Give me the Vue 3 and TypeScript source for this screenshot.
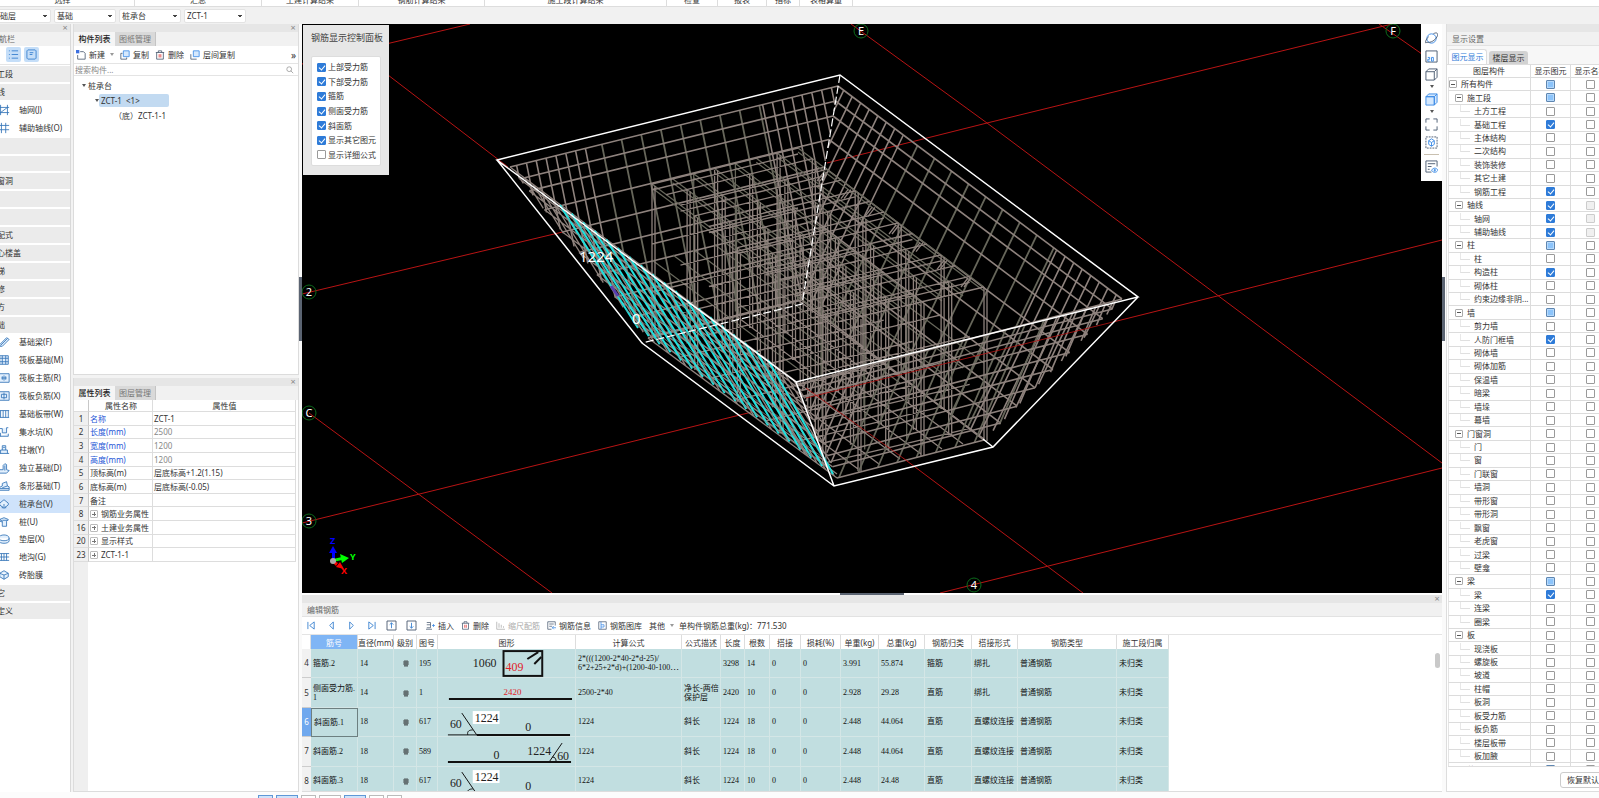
<script setup lang="ts">
import { ref } from 'vue'

type Pt = [number, number]

const ribbon = [
  { label: '选择', w: 144 }, { label: '汇总', w: 127 }, { label: '土建计算结果', w: 97 },
  { label: '钢筋计算结果', w: 126 }, { label: '施工段计算结果', w: 182 }, { label: '检查', w: 51 },
  { label: '报表', w: 49 }, { label: '指标', w: 33 }, { label: '表格算量', w: 53 },
]
const combos = [
  { name: '楼层', value: '基础层' }, { name: '类别', value: '基础' },
  { name: '构件类型', value: '桩承台' }, { name: '构件', value: 'ZCT-1' },
]

interface NavEntry { label: string; icon?: string; active?: boolean }
const nav: NavEntry[] = [
  { label: '施工段' }, { label: '轴线' },
  { label: '轴网(J)', icon: 'M2 0V12M10 0V12M0 3H12M0 9H12M2 9L10 3' },
  { label: '辅助轴线(O)', icon: 'M3 0V12M8 0V12M0 3H12M0 8H12' },
  { label: '柱' }, { label: '墙' }, { label: '门窗洞' }, { label: '梁' }, { label: '板' },
  { label: '装配式' }, { label: '空心楼盖' }, { label: '楼梯' }, { label: '装修' }, { label: '土方' }, { label: '基础' },
  { label: '基础梁(F)', icon: 'M1 9L9 1L12 3L4 11L1 11ZM2 10L10 2' },
  { label: '筏板基础(M)', icon: 'M1 1H11V11H1ZM4 1V11M8 1V11M1 4H11M1 8H11' },
  { label: '筏板主筋(R)', icon: 'M0 1H12V11H0ZM3 6H9M6 3V9M4 4V8M8 4V8' },
  { label: '筏板负筋(X)', icon: 'M0 1H12V11H0ZM3 4H9V8H3ZM6 2V10' },
  { label: '基础板带(W)', icon: 'M0 2H12M0 10H12M2 2V10M5 2V10M8 2V10M11 2V10' },
  { label: '集水坑(K)', icon: 'M0 2H4V7H9V1M9 1H11M0 11H11V8M2 7V11' },
  { label: '柱墩(Y)', icon: 'M0 10H12M2 10V6H10V10M4 6V1H8V6M5 3H7' },
  { label: '独立基础(D)', icon: 'M0 11L1 8H5V3L7 1L9 2V8L12 9L9 12H0ZM7 3V9' },
  { label: '条形基础(T)', icon: 'M0 11V8L4 6V3L9 1L10 6L12 7V11ZM4 8L10 6M0 9H12' },
  { label: '桩承台(V)', icon: 'M1 5L6 1L11 5V7L6 11L1 7ZM4 9V11M8 9V11M6 6V11', active: true },
  { label: '桩(U)', icon: 'M1 3L6 1L11 3L9 5V11H4V5ZM1 3V5L4 6M4 4H11' },
  { label: '垫层(X)', icon: 'M0 5C0 0 12 0 12 5V8C12 12 0 12 0 8ZM0 5C0 9 12 9 12 5' },
  { label: '地沟(G)', icon: 'M0 2H12M0 10H12M3 2V10M6 2V10M9 2V10M0 6H12' },
  { label: '砖胎膜', icon: 'M1 4L6 1L11 4V8L6 11L1 8ZM1 4L6 6L11 4M6 6V11' },
  { label: '其它' }, { label: '自定义' },
]

interface Prop { n: number; name: string; value: string; kind?: string }
const props: Prop[] = [
  { n: 1, name: '名称', value: 'ZCT-1', kind: 'key' },
  { n: 2, name: '长度(mm)', value: '2500', kind: 'key size' },
  { n: 3, name: '宽度(mm)', value: '1200', kind: 'key size' },
  { n: 4, name: '高度(mm)', value: '1200', kind: 'key size' },
  { n: 5, name: '顶标高(m)', value: '层底标高+1.2(1.15)' },
  { n: 6, name: '底标高(m)', value: '层底标高(-0.05)' },
  { n: 7, name: '备注', value: '' },
  { n: 8, name: '钢筋业务属性', value: '', kind: 'group' },
  { n: 16, name: '土建业务属性', value: '', kind: 'group' },
  { n: 20, name: '显示样式', value: '', kind: 'group' },
  { n: 23, name: 'ZCT-1-1', value: '', kind: 'group' },
]

const rebarToggles = ref([
  { label: '上部受力筋', on: true }, { label: '下部受力筋', on: true }, { label: '箍筋', on: true },
  { label: '侧面受力筋', on: true }, { label: '斜面筋', on: true }, { label: '显示其它图元', on: true },
  { label: '显示详细公式', on: false },
])

/* Layer tree: leading digit = depth, trailing mark: * checked, ~ partial, ! checked with locked name box */
const layerSource = `0所有构件~|1施工段~|2土方工程|2基础工程*|2主体结构|2二次结构|2装饰装修|2其它土建|2钢筋工程*
|1轴线!|2轴网!|2辅助轴线!|1柱~|2柱|2构造柱*|2砌体柱|2约束边缘非阴...|1墙~|2剪力墙|2人防门框墙*|2砌体墙|2砌体加筋
|2保温墙|2暗梁|2墙垛|2幕墙|1门窗洞|2门|2窗|2门联窗|2墙洞|2带形窗|2带形洞|2飘窗|2老虎窗|2过梁|2壁龛
|1梁~|2梁*|2连梁|2圈梁|1板|2现浇板|2螺旋板|2坡道|2柱帽|2板洞|2板受力筋|2板负筋|2楼层板带|2板加腋|1装配式~`
const layers = ref(layerSource.replace(/\n/g, '').split('|').map((s) => {
  const mark = s.slice(-1)
  return {
    depth: Number(s[0]),
    name: s.slice(1).replace(/[*~!]$/, ''),
    on: mark === '*' || mark === '!',
    part: mark === '~',
    locked: mark === '!',
  }
}))

const columns = [
  { t: '筋号', w: 47 }, { t: '直径(mm)', w: 36 }, { t: '级别', w: 23 }, { t: '图号', w: 21 }, { t: '图形', w: 138 },
  { t: '计算公式', w: 106 }, { t: '公式描述', w: 39 }, { t: '长度', w: 24 }, { t: '根数', w: 25 }, { t: '搭接', w: 31 },
  { t: '损耗(%)', w: 40 }, { t: '单重(kg)', w: 38 }, { t: '总重(kg)', w: 46 }, { t: '钢筋归类', w: 47 },
  { t: '搭接形式', w: 46 }, { t: '钢筋类型', w: 99 }, { t: '施工段归属', w: 52 },
]
interface Bar { n: number; name: string; d: string; code: string; shape: string; formula: string; rest: string[] }
const bars: Bar[] = [
  { n: 4, name: '箍筋.2', d: '14', code: '195', shape: 'stirrup', formula: '2*(((1200-2*40-2*d-25)/\n6*2+25+2*d)+(1200-40-100⋯', rest: ['', '3298', '14', '0', '0', '3.991', '55.874', '箍筋', '绑扎', '普通钢筋', '未归类'] },
  { n: 5, name: '侧面受力筋.\n1', d: '14', code: '1', shape: 'straight', formula: '2500-2*40', rest: ['净长-两倍\n保护层', '2420', '10', '0', '0', '2.928', '29.28', '直筋', '绑扎', '普通钢筋', '未归类'] },
  { n: 6, name: '斜面筋.1', d: '18', code: '617', shape: 'left', formula: '1224', rest: ['斜长', '1224', '18', '0', '0', '2.448', '44.064', '直筋', '直螺纹连接', '普通钢筋', '未归类'] },
  { n: 7, name: '斜面筋.2', d: '18', code: '589', shape: 'right', formula: '1224', rest: ['斜长', '1224', '18', '0', '0', '2.448', '44.064', '直筋', '直螺纹连接', '普通钢筋', '未归类'] },
  { n: 8, name: '斜面筋.3', d: '18', code: '617', shape: 'left', formula: '1224', rest: ['斜长', '1224', '10', '0', '0', '2.448', '24.48', '直筋', '直螺纹连接', '普通钢筋', '未归类'] },
]

/* ---- wireframe geometry ---- */
const mix = (a: Pt, b: Pt, t: number): Pt => [a[0] + (b[0] - a[0]) * t, a[1] + (b[1] - a[1]) * t]
const seg = (a: Pt, b: Pt) => `M${a[0].toFixed(1)} ${a[1].toFixed(1)}L${b[0].toFixed(1)} ${b[1].toFixed(1)}`
const down = (p: Pt, h: number): Pt => [p[0], p[1] + h]

function hit(p: Pt, dir: Pt, a: Pt, b: Pt): number {
  const e: Pt = [b[0] - a[0], b[1] - a[1]]
  const den = dir[0] * e[1] - dir[1] * e[0]
  if (Math.abs(den) < 1e-6) return Infinity
  const w: Pt = [a[0] - p[0], a[1] - p[1]]
  const t = (w[0] * e[1] - w[1] * e[0]) / den
  const s = (w[0] * dir[1] - w[1] * dir[0]) / den
  return t > 0.01 && s >= -0.001 && s <= 1.001 ? t : Infinity
}

const half = [0.02, 0.05, 0.08, 0.11, 0.14, 0.17, 0.2, 0.23]
const middle = [0.28, 0.34, 0.4, 0.46, 0.52, 0.58, 0.64, 0.7, 0.76]
const ends = [...half, ...half.map((u) => 1 - u)]
const levels = [0, 0.07, 0.14, 0.25, 0.38, 0.5, 0.63, 0.76, 0.88, 1]

function slanted(tl: Pt, tr: Pt, br: Pt, bl: Pt, dir: Pt, us: number[]): string {
  return us.map((u) => {
    const p = mix(tl, tr, u)
    const t = Math.min(hit(p, dir, tl, bl), hit(p, dir, tr, br), hit(p, dir, bl, br))
    return Number.isFinite(t) ? seg(p, [p[0] + dir[0] * t, p[1] + dir[1] * t]) : ''
  }).join('')
}
const rows = (tl: Pt, tr: Pt, br: Pt, bl: Pt, vs: number[]) => vs.map((v) => seg(mix(tl, bl, v), mix(tr, br, v))).join('')

const A: Pt = [510, 167], B: Pt = [838, 86], C: Pt = [1122, 299], D: Pt = [799, 384]
const a: Pt = [648, 338], b: Pt = [802, 300], c: Pt = [984, 440], d: Pt = [837, 478]

const backTan = rows(A, B, b, a, levels) + rows(B, C, c, b, levels)
  + slanted(A, B, b, a, [0.2, 1], ends) + slanted(B, C, c, b, [-0.48, 1], ends)
const backOlive = slanted(A, B, b, a, [0.2, 1], middle) + slanted(B, C, c, b, [-0.48, 1], middle)
const frontTan = rows(D, C, c, d, levels) + slanted(D, C, c, d, [-0.43, 1], ends)
const frontOlive = slanted(D, C, c, d, [-0.43, 1], middle)
const sideTan = rows(A, D, d, a, levels) + slanted(A, D, d, a, [0.62, 1], [...ends, ...middle])
const sideCross = rows([556, 202], [768, 362], [833, 474], [638, 328], [0.12, 0.25, 0.38, 0.5, 0.62, 0.74, 0.86, 0.97])

const T0: Pt = [652, 184], T1: Pt = [798, 148], T2: Pt = [984, 287], T3: Pt = [837, 322]
let cageTan = ''
let cageOlive = ''
for (let j = 0; j <= 13; j++) {
  const l = mix(T0, T3, j / 13), r = mix(T1, T2, j / 13)
  const hs = j % 2 ? [0] : [0, 6, 60, 108, 152]
  for (const h of hs) cageTan += seg(down(l, h), down(r, h))
  for (let i = 0; i <= 7; i++) {
    const p = mix(l, r, i / 7)
    if ((i * 2 + j) % 3 === 0) cageTan += seg(p, down(p, 154)) + seg([p[0] + 3, p[1] + 2], [p[0] + 3, p[1] + 154])
    else if (j % 3 === 0 && i % 2 === 0) cageOlive += seg(p, down(p, 148))
  }
}
for (let i = 0; i <= 7; i++) {
  const l = mix(T0, T1, i / 7), r = mix(T3, T2, i / 7)
  for (const h of [0, 4, 76]) cageOlive += seg(down(l, h), down(r, h))
  cageTan += seg(down(l, 152), down(r, 152))
}
let hooks = ''
for (let k = 0; k < 7; k++) {
  const p = mix([824, 172], [968, 278], k / 6)
  hooks += seg(p, [p[0] - 7, p[1] + 9]) + seg([p[0] + 3, p[1]], [p[0] - 4, p[1] + 9])
}
let cyan = ''
for (let k = 0; k <= 18; k++) cyan += seg(mix([560, 205], [768, 360], k / 18), mix([638, 328], [833, 474], k / 18))

const axes = [
  { t: 'C', x: 309, y: 413 }, { t: '2', x: 309, y: 292 }, { t: '3', x: 309, y: 521 },
  { t: 'E', x: 861, y: 31 }, { t: 'F', x: 1393, y: 31 }, { t: '4', x: 974, y: 585 },
]
</script>

<template>
  <div class="app">
    <header class="ribbon">
      <span v-for="r in ribbon" :key="r.label" :style="{ width: r.w + 'px' }">{{ r.label }}</span>
    </header>
    <div class="context">
      <select v-for="cb in combos" :key="cb.name" :aria-label="cb.name"><option>{{ cb.value }}</option></select>
    </div>

    <main class="work">
      <nav class="side pane">
        <div class="strip"><button aria-label="关闭导航栏">×</button></div>
        <h2 class="nav-title">导航栏</h2>
        <div class="nav-tools">
          <button aria-label="列表显示"><svg viewBox="0 0 12 12"><path d="M1 2H2M1 6H2M1 10H2M4 2H11M4 6H11M4 10H11" /></svg></button>
          <button aria-label="图标显示"><svg viewBox="0 0 12 12"><path d="M2 1H10L11 2V10L10 11H2L1 10V2ZM4 4H8M4 6H7" /></svg></button>
        </div>
        <ul class="nav-list">
          <li v-for="n in nav" :key="n.label" :class="{ group: !n.icon, active: n.active }">
            <svg v-if="n.icon" viewBox="-1 -1 14 14"><path :d="n.icon" /></svg>
            <span>{{ n.label }}</span>
          </li>
        </ul>
      </nav>

      <div class="mid">
        <section class="pane list">
          <div class="strip"><button aria-label="关闭构件列表">×</button></div>
          <div class="tabs"><button class="on">构件列表</button><button>图纸管理</button></div>
          <div class="tools">
            <button><svg viewBox="0 0 12 12"><path class="k" d="M5 2H9L11 4V11H2V6" /><path class="fill" d="M0 0H4V4H0Z" /></svg>新建<i class="caret"></i></button>
            <button><svg viewBox="0 0 12 12"><path class="k" d="M3 4H1V11H8V9" /><path class="lt" d="M4 1H11V8H4Z" /></svg>复制</button>
            <button><svg viewBox="0 0 12 12"><path class="k" d="M1 3H11M4 3V1H8V3M2 3V11H10V3" /><path class="red" d="M5 5V9M7 5V9" /></svg>删除</button>
            <button><svg viewBox="0 0 12 12"><path class="k" d="M1 5V11H8" /><path class="lt" d="M4 1H11V8H4Z" /></svg>层间复制</button>
            <button class="more" aria-label="更多">»</button>
          </div>
          <label class="search"><input type="text" placeholder="搜索构件..." aria-label="搜索构件" /><svg viewBox="0 0 10 10"><circle cx="4" cy="4" r="3" /><path d="M6 6L9 9" /></svg></label>
          <ul class="tree">
            <li><i class="caret"></i>桩承台</li>
            <li class="l2"><i class="caret"></i><span class="sel">ZCT-1 &nbsp;&lt;1&gt;</span></li>
            <li class="l3">（底）ZCT-1-1</li>
          </ul>
        </section>
        <section class="pane attrs">
          <div class="strip"><button aria-label="关闭属性列表">×</button></div>
          <div class="tabs"><button class="on">属性列表</button><button>图层管理</button></div>
          <div class="attr-body">
            <table>
              <thead><tr><th class="no"></th><th class="pn">属性名称</th><th>属性值</th></tr></thead>
              <tbody>
                <tr v-for="p in props" :key="p.n" :class="p.kind">
                  <td class="no">{{ p.n }}</td>
                  <td><i v-if="p.kind === 'group'" class="box plus"></i>{{ p.name }}</td>
                  <td>{{ p.value }}</td>
                </tr>
              </tbody>
            </table>
          </div>
        </section>
      </div>
      <div class="split"><i></i></div>

      <div class="center">
        <section class="view">
          <svg class="scene" viewBox="302 24 1140 569" preserveAspectRatio="xMidYMid slice">
            <path class="grid" d="M302 64L470 24M388 75L508 167M302 294L571 230M827 163L987 123L1392 24M851 24L987 123L1442 463M1379 24L1442 68M309 413L552 593M302 523L752 412M940 593L1442 468" />
            <path class="olive" :d="backOlive" />
            <path class="tan" :d="backTan" />
            <path class="olive cage" :d="cageOlive" />
            <path class="tan cage" :d="cageTan" />
            <path class="tan cage" :d="hooks" />
            <path class="olive" :d="frontOlive" />
            <path class="tan" :d="frontTan" />
            <path class="grid dark" d="M806 388L903 458M806 398L1113 322" />
            <path class="grid" d="M903 458L1083 593M1113 322L1442 240" />
            <path class="tan cage" :d="sideTan" />
            <path class="cyan" :d="cyan" />
            <path class="tan cross" :d="sideCross" />
            <path class="violet" d="M611 286L618 296" />
            <path class="edge dash" d="M840 75L802 304L642 343" />
            <path class="edge" d="M497 160L840 75L1138 297L796 382ZM497 160L642 343L834 486L993 447L1138 297M796 382L834 486M983 439L993 447" />
            <text class="dim" x="579" y="262">1224</text>
            <text class="dim" x="632" y="324">0</text>
            <g v-for="ax in axes" :key="ax.t" class="bubble">
              <circle :cx="ax.x" :cy="ax.y" r="7" /><text :x="ax.x" :y="ax.y + 4">{{ ax.t }}</text>
            </g>
            <g class="gizmo">
              <path d="M332 552H335V561H332Z" fill="#00f" /><path d="M329 553L333 546L337 553Z" fill="#00f" />
              <path d="M333 559L342 557V560L333 562Z" fill="#0f0" /><path d="M340 554L349 558L342 563Z" fill="#0f0" />
              <path d="M333 560L338 563L336 566L332 562Z" fill="#f00" /><path d="M336 567L340 562L344 569Z" fill="#f00" />
              <circle cx="333" cy="561" r="3" fill="#aaa" />
              <text x="330" y="544" fill="#00f">Z</text><text x="350" y="560" fill="#0f0">Y</text><text x="341" y="574" fill="#f00">X</text>
            </g>
          </svg>
          <div class="rebar-panel">
            <h2>钢筋显示控制面板</h2>
            <div class="rebar-box">
              <label v-for="t in rebarToggles" :key="t.label"><input v-model="t.on" type="checkbox" />{{ t.label }}</label>
            </div>
          </div>
          <div class="view-tools">
            <button aria-label="动态观察"><svg viewBox="0 0 14 14"><path class="b" d="M7 2A5 5 0 1 1 7 12A5 5 0 0 1 7 2" /><path class="k" d="M2 11C-1 14 1 7 4 5M9 2C12 0 15 1 13 5C11 9 6 12 2 11" /></svg></button>
            <button aria-label="二维"><svg viewBox="0 0 14 14"><path class="k" d="M1 1H13V13H1Z" /><path class="b" d="M3 8H5V10H3V12H5M7 8V12H9V8Z" /></svg></button>
            <button class="dd" aria-label="视角"><svg viewBox="0 0 14 14"><path class="k" d="M1 4H10V13H1ZM1 4L4 1H13V10L10 13M10 4L13 1" /></svg><i class="caret"></i></button>
            <button class="dd" aria-label="显示方式"><svg viewBox="0 0 14 14"><path class="b lt" d="M1 4H10V13H1ZM1 4L4 1H13V10L10 13M10 4L13 1M10 4V13M1 4H10" /></svg><i class="caret"></i></button>
            <button aria-label="全屏"><svg viewBox="0 0 14 14"><path class="k" d="M1 5V1H5M9 1H13V5M13 9V13H9M5 13H1V9" /></svg></button>
            <button aria-label="局部三维"><svg viewBox="0 0 14 14"><path class="k" stroke-dasharray="2 1" d="M1 1H13V13H1Z" /><path class="b" d="M4 5L7 3L10 5V9L7 11L4 9ZM4 5L7 7L10 5M7 7V11" /></svg></button>
            <hr />
            <button aria-label="显示设置"><svg viewBox="0 0 14 14"><path class="k" d="M7 13H1V1H13V7M3 4H11M3 7H7M3 10H5" /><path class="b" d="M7 11C9 8 12 8 14 11C12 14 9 14 7 11M10 10H11V12H10Z" /></svg></button>
          </div>
        </section>
        <div class="hsplit"><i></i></div>
        <section class="pane edit">
          <div class="strip"><button aria-label="关闭编辑钢筋">×</button></div>
          <h2 class="title">编辑钢筋</h2>
          <div class="tools edit-tools">
            <button class="step" aria-label="第一条"><svg viewBox="0 0 10 10"><path d="M1 1V9M8 1V9L3 5Z" /></svg></button>
            <button class="step" aria-label="上一条"><svg viewBox="0 0 10 10"><path d="M7 1V9L3 5Z" /></svg></button>
            <button class="step" aria-label="下一条"><svg viewBox="0 0 10 10"><path d="M3 1V9L7 5Z" /></svg></button>
            <button class="step" aria-label="最后一条"><svg viewBox="0 0 10 10"><path d="M9 1V9M2 1V9L7 5Z" /></svg></button>
            <button class="step" aria-label="上移"><svg viewBox="0 0 10 10"><path class="k" d="M0 0H10V10H0Z" /><path d="M5 8V2M3 4L5 2L7 4" /></svg></button>
            <button class="step" aria-label="下移"><svg viewBox="0 0 10 10"><path class="k" d="M0 0H10V10H0Z" /><path d="M5 2V8M3 6L5 8L7 6" /></svg></button>
            <button><svg viewBox="0 0 12 12"><path class="k" d="M1 2H6V9H1M1 5H6M0 11H8" /><path class="b" d="M8 6H12M10 4V8" /></svg>插入</button>
            <button><svg viewBox="0 0 12 12"><path class="k" d="M1 3H11M4 3V1H8V3M2 3V11H10V3" /><path class="red" d="M5 5V9M7 5V9" /></svg>删除</button>
            <button disabled><svg viewBox="0 0 12 12"><path class="g" d="M1 1V11H12M4 3V9M7 5V9M10 7V9" /></svg>缩尺配筋</button>
            <button><svg viewBox="0 0 12 12"><path class="k" d="M6 11H1V1H11V6M3 4H9M3 7H7" /><path class="b" d="M7 9H12M9 7L7 9L9 11" /></svg>钢筋信息</button>
            <button><svg viewBox="0 0 12 12"><path class="k" d="M1 1H11V11H1Z" /><path class="b" d="M4 1V11M4 5H8V8H4" /></svg>钢筋图库</button>
            <button>其他<i class="caret"></i></button>
            <span>单构件钢筋总重(kg)：771.530</span>
          </div>
          <div class="sheet">
            <table>
              <colgroup><col class="c0" /><col v-for="k in columns" :key="k.t" :style="{ width: k.w + 'px' }" /></colgroup>
              <thead><tr><th></th><th v-for="(k, i) in columns" :key="k.t" :class="{ hot: i === 0 }">{{ k.t }}</th></tr></thead>
              <tbody>
                <tr v-for="r in bars" :key="r.n" :class="{ cur: r.n === 6 }">
                  <th scope="row">{{ r.n }}</th>
                  <td class="nm">{{ r.name }}</td><td>{{ r.d }}</td>
                  <td class="mid-cell"><svg class="grade" viewBox="0 0 8 8"><path d="M1 3H7M1 5H7M3 1V7M5 1V7M2 7H6" /></svg></td>
                  <td>{{ r.code }}</td>
                  <td class="fig">
                    <svg viewBox="0 0 138 28">
                      <g v-if="r.shape === 'stirrup'">
                        <rect class="thick" x="66" y="2" width="39" height="25" /><path class="thick" d="M90 10L101 3M97 15L104 8" />
                        <text x="35" y="18">1060</text><text class="r" x="68" y="22">409</text>
                      </g>
                      <g v-else-if="r.shape === 'straight'">
                        <path class="thick" d="M11 20H135" /><text class="r s" x="66" y="16">2420</text>
                      </g>
                      <g v-else-if="r.shape === 'left'">
                        <path d="M24 5L39 27M30 27C29 23 32 22 35 22M10 27H39" /><path class="thick" d="M39 27H133" />
                        <rect class="bg" x="35" y="3" width="27" height="13" />
                        <text x="12" y="20">60</text><text x="37" y="14">1224</text><text x="88" y="23">0</text>
                      </g>
                      <g v-else>
                        <path class="thick" d="M10 25H134" /><path d="M125 6L112 25M115 20C118 20 119 22 119 25" />
                        <text x="56" y="22">0</text><text x="90" y="18">1224</text><text x="120" y="23">60</text>
                      </g>
                    </svg>
                  </td>
                  <td>{{ r.formula }}</td>
                  <td v-for="(v, i) in r.rest" :key="i">{{ v }}</td>
                </tr>
              </tbody>
            </table>
            <i class="thumb"></i>
          </div>
        </section>
      </div>
      <div class="split right"><i></i></div>

      <aside class="pane display">
        <div class="strip"></div>
        <h2 class="title">显示设置</h2>
        <div class="dtabs"><button class="on">图元显示</button><button>楼层显示</button></div>
        <div class="layers">
          <table>
            <thead><tr><th class="lname">图层构件</th><th class="lc">显示图元</th><th class="lc">显示名称</th></tr></thead>
            <tbody>
              <tr v-for="(l, i) in layers" :key="i">
                <td :class="'d' + l.depth"><i v-if="l.depth < 2" class="box"></i><i v-else class="twig"></i>{{ l.name }}</td>
                <td><input v-model="l.on" type="checkbox" :class="{ part: l.part }" :aria-label="l.name + ' 显示图元'" /></td>
                <td><input type="checkbox" :disabled="l.locked" :aria-label="l.name + ' 显示名称'" /></td>
              </tr>
            </tbody>
          </table>
        </div>
        <div class="dfoot"><button>恢复默认设置</button></div>
      </aside>
    </main>

    <footer class="status">
      <i class="b w1"></i><i class="b w2"></i><i class="w1"></i><i class="w2"></i><i class="b w2"></i><i class="w1"></i><i class="w1"></i>
    </footer>
  </div>
</template>

<style>
html, body { margin: 0; background: #fcfcfc; }
</style>

<style scoped>
.app { display: flex; flex-direction: column; height: 100vh; overflow: hidden; background: #fcfcfc; color: #333; font-family: "Noto Sans", "Noto Sans CJK SC", sans-serif; font-size: 8px; line-height: 12px; }
.app * { box-sizing: border-box; }
button, select, input { font: inherit; color: inherit; margin: 0; padding: 0; border: 0; background: none; }
button { display: inline-flex; align-items: center; justify-content: center; white-space: nowrap; }
h2 { margin: 0; font-size: 8px; font-weight: 400; color: #666; }
ul { list-style: none; margin: 0; padding: 0; }
svg { display: block; fill: none; stroke: #3b82d0; stroke-width: 1; flex: none; }
svg .k { stroke: #4a5a70; }
svg .b { stroke: #3b8ae6; }
svg .g { stroke: #aaa; }
svg .red { stroke: #d33; }
svg .lt { stroke: #3b8ae6; fill: #d5e8fd; }
svg .fill { fill: #3b6fe0; stroke: none; }
table { border-collapse: separate; border-spacing: 0; table-layout: fixed; }
th, td { padding: 0; font-weight: 400; overflow: hidden; white-space: nowrap; }
.caret { border: 2px solid transparent; border-top: 3px solid #555; border-bottom: 0; width: 0; height: 0; flex: none; }

.ribbon { display: flex; align-items: flex-end; height: 7px; margin-left: -9px; overflow: hidden; background: #fff; border-bottom: 1px solid #ddd; flex: none; }
.ribbon span { flex: none; text-align: center; line-height: 12px; border-right: 1px solid #ddd; }
.context { display: flex; gap: 3px; align-items: center; height: 17px; margin-left: -11px; background: #f1f1f1; flex: none; }
.context select { appearance: none; width: 62px; height: 14px; padding-left: 2px; border: 1px solid #e3e3e3; border-radius: 2px; background: linear-gradient(#444, #444) 53px 5px / 4px 1px no-repeat, linear-gradient(#444, #444) 54px 6px / 2px 1px no-repeat, #fff; line-height: 12px; }

.work { display: flex; flex: 1; min-height: 0; background: #f3f3f3; }
.pane { background: #fff; display: flex; flex-direction: column; min-height: 0; overflow: hidden; }
.strip { display: flex; justify-content: flex-end; align-items: center; height: 8px; padding-right: 1px; background: #e6e6e6; flex: none; }
.strip button { width: 8px; height: 8px; color: #888; font-size: 9px; line-height: 8px; }
.title { height: 14px; padding-left: 5px; background: #f1f1f1; flex: none; border-bottom: 1px solid #e2e2e2; line-height: 13px; }

.side { width: 71px; flex: none; border-right: 1px solid #d9d9d9; }
.nav-title { height: 14px; background: #f1f1f1; margin-left: -9px; line-height: 14px; flex: none; }
.nav-tools { display: flex; gap: 3px; padding: 1px 0 2px 6px; height: 19px; border-bottom: 1px solid #e5e5e5; flex: none; }
.nav-tools button { width: 15px; height: 15px; border-radius: 2px; background: #c5def8; }
.nav-tools svg { width: 11px; height: 11px; }
.nav-list { display: grid; grid-auto-rows: 1fr; height: 555px; margin-left: -12px; flex: none; }
.nav-list li { display: flex; align-items: center; gap: 9px; padding-left: 10px; line-height: 16px; min-height: 0; white-space: nowrap; }
.nav-list li.group { padding-left: 1px; background: #ebebeb; border: solid #fff; border-width: 1px 0; }
.nav-list li.active { background: #cfe3fb; }
.nav-list svg { width: 12px; height: 12px; fill: #e3f0fd; stroke: #3575b8; }

.mid { display: flex; flex-direction: column; gap: 3px; width: 226px; margin-left: 2px; flex: none; }
.mid .pane { border: 1px solid #dcdcdc; border-top: 0; }
.list { flex: 0 0 351px; }
.attrs { flex: 1; }
.tabs { display: flex; height: 14px; background: #f1f1f1; flex: none; }
.tabs button { width: 41px; background: #d9d9d9; color: #777; border-right: 1px solid #c4c4c4; }
.tabs button.on { background: #f5f5f5; color: #222; font-weight: 500; border-right: 0; }
.tools { display: flex; align-items: center; height: 18px; gap: 6px; padding-left: 2px; border-bottom: 1px solid #e4e4e4; flex: none; }
.tools button { gap: 3px; }
.tools svg { width: 10px; height: 10px; }
.tools .caret { margin-left: 2px; opacity: .6; }
.tools .more { margin-left: auto; font-size: 10px; width: 9px; }
.search { display: flex; align-items: center; height: 12px; padding: 0 4px 0 1px; border-bottom: 1px solid #e4e4e4; flex: none; }
.search input { flex: 1; min-width: 0; height: 11px; outline: 0; }
.search input::placeholder { color: #888; opacity: 1; }
.search svg { width: 8px; height: 8px; stroke: #999; }
.tree { padding-top: 2px; }
.tree li { display: flex; align-items: center; gap: 2px; height: 15px; padding-left: 8px; }
.tree .l2 { padding-left: 21px; gap: 0; }
.tree .sel { width: 70px; padding-left: 2px; line-height: 13px; background: #c2daf1; border-radius: 2px; }
.tree .l3 { padding-left: 40px; }

.attr-body { flex: 1; background: linear-gradient(90deg, #efefef 14px, #fff 14px); }
.attr-body table { width: calc(100% - 2px); height: 162px; }
.attr-body th, .attr-body td { line-height: 11px; border: solid #ddd; border-width: 0 1px 1px 0; padding-left: 1px; }
.attr-body .no { width: 15px; padding: 0; text-align: center; background: #f0f0f0; border-right-color: #c8c8c8; }
.attr-body th.no { background: #fff; }
.attr-body .pn { width: 64px; }
.key td:nth-child(2) { color: #2456d6; }
.size td:nth-child(3) { color: #888; }
.box { position: relative; display: inline-block; width: 8px; height: 8px; margin-right: 4px; vertical-align: -1px; border: 1px solid #aaa; border-radius: 1px; background: linear-gradient(#555, #555) center / 4px 1px no-repeat; }
.box.plus { margin-right: 3px; background: linear-gradient(#777, #777) center / 4px 1px no-repeat, linear-gradient(#777, #777) center / 1px 4px no-repeat; border-color: #bbb; }

.split { display: flex; align-items: flex-start; width: 3px; padding-top: 253px; flex: none; background: #fafafa; }
.split i { width: 3px; height: 64px; background: #5b6472; }
.split.right { width: 4px; }

.center { display: flex; flex-direction: column; flex: 1; min-width: 0; }
.view { position: relative; flex: 1; min-height: 0; background: #000; overflow: hidden; }
.scene { width: 100%; height: 100%; }
.grid { stroke: #b81414; stroke-width: 1; }
.grid.dark { opacity: .8; }
.tan { stroke: #8e827d; stroke-width: 1.6; }
.olive { stroke: #66665a; stroke-width: 1.8; }
.scene .cage { stroke-width: 1.3; }
.cross { stroke-width: 1; opacity: .75; }
.cyan { stroke: #1fe0de; stroke-width: 2; }
.violet { stroke: #5a3fb0; stroke-width: 3; }
.edge { stroke: #fff; stroke-width: 1.5; }
.dash { stroke-dasharray: 8 3; stroke-width: 1.2; }
.dim { fill: #fff; stroke: none; font-size: 15px; }
.bubble circle { stroke: #0c6b1c; }
.bubble text { fill: #fff; stroke: none; font-size: 11px; text-anchor: middle; }
.gizmo { stroke: none; }
.gizmo text { font-size: 9px; font-weight: 700; }
.rebar-panel { position: absolute; left: 1px; top: 1px; width: 86px; padding: 6px 8px 9px; background: #e7e7e7; }
.rebar-panel h2 { font-size: 9px; line-height: 14px; color: #444; white-space: nowrap; }
.rebar-box { display: flex; flex-direction: column; height: 110px; margin-top: 11px; padding: 3px 0 3px 5px; border: 1px solid #ddd; border-radius: 2px; background: #fff; }
.rebar-box label { display: flex; align-items: center; gap: 2px; flex: 1; white-space: nowrap; }
input[type="checkbox"] { appearance: none; position: relative; width: 9px; height: 9px; border: 1px solid #9a9a9a; border-radius: 1px; background: #fff; flex: none; }
input[type="checkbox"]:checked { background: #2e7bd8; border-color: #2e7bd8; }
input[type="checkbox"]:checked::after { content: ""; position: absolute; left: 2px; top: 0; width: 3px; height: 5px; border: solid #fff; border-width: 0 1px 1px 0; transform: rotate(40deg); }
input.part[type="checkbox"] { background: #8cc4fb; border-color: #5f86b0; box-shadow: inset 0 0 0 1px #b6d9fb; }
input[type="checkbox"]:disabled { background: #f0f0f0; border-color: #ccc; }
.view-tools { position: absolute; right: 0; top: 0; display: flex; flex-direction: column; align-items: center; gap: 5px; width: 21px; padding: 8px 0; background: #fff; }
.view-tools svg { width: 13px; height: 13px; }
.view-tools .dd { flex-direction: column; gap: 4px; }
.view-tools hr { width: 15px; margin: 0; border: 0; border-top: 1px solid #c9c0b0; }

.hsplit { display: flex; justify-content: center; height: 2px; background: #fff; flex: none; }
.hsplit i { width: 64px; height: 2px; background: #5b6472; }
.edit { flex: 0 0 197px; border-bottom: 1px solid #ddd; }
.edit-tools { gap: 7px; padding-left: 0; }
.edit-tools .step { width: 20px; margin-right: -7px; }
.edit-tools .step + button:not(.step) { margin-left: 9px; }
.edit-tools svg { width: 9px; height: 9px; overflow: visible; }
.edit-tools .step { justify-content: flex-start; padding-left: 5px; }
.edit-tools .step + button:not(.step) { margin-left: 4px; }
.edit-tools button:disabled { color: #aaa; }
.edit-tools span { white-space: nowrap; margin-left: -2px; }
.sheet { position: relative; flex: 1; min-height: 0; overflow: hidden; }
.sheet table { width: 867px; height: 161px; }
.c0 { width: 9px; }
.sheet thead th { height: 14px; line-height: 13px; border-right: 1px solid #ddd; overflow: visible; }
.sheet thead th.hot { background: #7fb5f5; color: #fff; }
.sheet tbody th { background: #f1f1f1; border-bottom: 1px solid #ccc; }
.sheet td { height: 29px; padding: 0 0 0 2px; line-height: 9px; white-space: pre; color: #111; background: #c1dee0; border: solid #d4e6e6; border-width: 0 1px 1px 0; font-family: "Liberation Serif", "Noto Sans CJK SC", serif; }
.sheet .cur th { background: #6fa8ee; color: #fff; }
.sheet .cur .nm { border: 1px solid #6d7f80; }
.sheet td.fig { padding: 0; }
.sheet .grade { width: 8px; height: 8px; margin-left: 6px; stroke: #222; stroke-width: .7; }
.fig svg { width: 137px; height: 28px; stroke: #111; }
.fig .thick { stroke-width: 2; }
.fig .bg { fill: #fff; stroke: none; }
.fig text { fill: #222; stroke: none; font-size: 12px; }
.fig .r { fill: #e0202a; }
.fig .s { font-size: 9px; }
.thumb { position: absolute; right: 2px; top: 18px; width: 5px; height: 15px; border-radius: 3px; background: #c9c9c9; }

.display { width: 153px; flex: none; border-left: 1px solid #ddd; border-bottom: 1px solid #ddd; }
.dtabs { display: flex; gap: 2px; align-items: flex-end; height: 19px; padding-left: 1px; border-bottom: 1px solid #ddd; background: #f7f7f7; flex: none; }
.dtabs button { width: 39px; height: 13px; border-radius: 3px 3px 0 0; background: #d2d2d2; }
.dtabs button.on { height: 15px; background: #fff; color: #2e7bd8; border: 1px solid #ddd; border-bottom: 0; }
.layers { flex: 1; min-height: 0; overflow: hidden; margin-left: 1px; border-bottom: 1px solid #ddd; }
.layers table { width: 163px; height: 712px; }
.layers th, .layers td { line-height: 12px; border: solid #dcdcdc; border-width: 0 1px 1px 0; text-align: center; }
.layers .lname { width: 83px; }
.layers .lc { width: 40px; }
.layers td:first-child { text-align: left; border-left: 1px solid #e4e4e4; }
.layers td input { display: block; margin: 0 auto; }
.layers .d1 { padding-left: 6px; }
.layers .d2 { padding-left: 11px; }
.twig { display: inline-block; width: 10px; height: 7px; margin-right: 4px; border-bottom: 1px solid #e0e0e0; border-left: 1px solid #e8e8e8; vertical-align: 2px; }
.dfoot { display: flex; height: 24px; padding: 5px 0 3px 113px; flex: none; }
.dfoot button { width: 62px; flex: none; border: 1px solid #ccc; border-radius: 3px; }

.status { display: flex; gap: 3px; height: 6px; padding: 3px 0 0 258px; flex: none; }
.status i { height: 6px; border: 1px solid #bbb; flex: none; background: #fff; }
.status .w1 { width: 15px; }
.status .w2 { width: 22px; }
.status .b { background: #cfe3fb; border-color: #5f97d6; }
</style>
